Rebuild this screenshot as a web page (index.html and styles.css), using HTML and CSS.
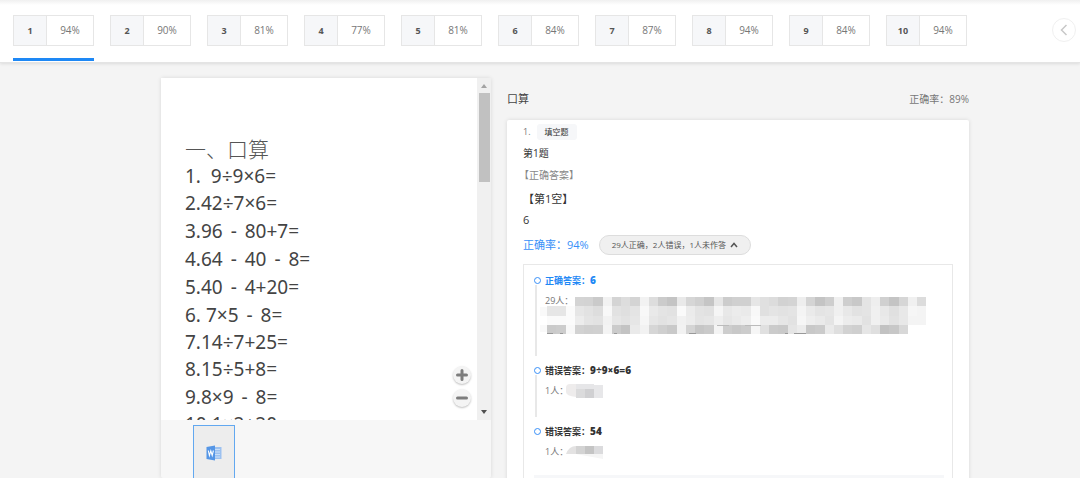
FILE: index.html
```html
<!DOCTYPE html>
<html lang="zh-CN">
<head>
<meta charset="utf-8">
<title>口算</title>
<link rel="stylesheet" href="styles.css">
</head>
<body>
<header class="topbar">
  <nav class="tabs">
    <button class="tab active"><b>1</b><span>94%</span></button>
    <button class="tab"><b>2</b><span>90%</span></button>
    <button class="tab"><b>3</b><span>81%</span></button>
    <button class="tab"><b>4</b><span>77%</span></button>
    <button class="tab"><b>5</b><span>81%</span></button>
    <button class="tab"><b>6</b><span>84%</span></button>
    <button class="tab"><b>7</b><span>87%</span></button>
    <button class="tab"><b>8</b><span>94%</span></button>
    <button class="tab"><b>9</b><span>84%</span></button>
    <button class="tab"><b>10</b><span>94%</span></button>
  </nav>
  <button class="prev" aria-label="上一页"><svg width="8" height="12" viewBox="0 0 8 12"><path d="M6.5 1L1.5 6l5 5" fill="none" stroke="#c8c8c8" stroke-width="1.5"/></svg></button>
</header>
<main class="content">
  <section class="paper">
    <div class="viewer">
      <article class="sheet">
        <h1>一、口算</h1>
        <p>1.&nbsp; 9÷9×6=</p>
        <p>2.42÷7×6=</p>
        <p class="tall">3.96<i>-</i>80+7=</p>
        <p class="tall">4.64<i>-</i>40<i>-</i>8=</p>
        <p class="tall">5.40<i>-</i>4+20=</p>
        <p class="tall">6. 7×5<i>-</i>8=</p>
        <p>7.14÷7+25=</p>
        <p>8.15÷5+8=</p>
        <p class="tall">9.8×9<i>-</i>8=</p>
        <p>10.1×2+20=</p>
      </article>
      <div class="zoomer">
        <button aria-label="放大"><svg width="12" height="12" viewBox="0 0 12 12"><path d="M6 1.5v9M1.5 6h9" stroke="#7d7d7d" stroke-width="3" stroke-linecap="round"/></svg></button>
        <button aria-label="缩小"><svg width="12" height="12" viewBox="0 0 12 12"><path d="M1.5 6h9" stroke="#7d7d7d" stroke-width="3" stroke-linecap="round"/></svg></button>
      </div>
      <div class="scrollbar">
        <svg width="6" height="4" viewBox="0 0 6 4"><path d="M0 4l3-4 3 4z" fill="#a3a3a3"/></svg>
        <div class="thumb"></div>
        <svg width="6" height="4" viewBox="0 0 6 4"><path d="M0 0l3 4 3-4z" fill="#505050"/></svg>
      </div>
    </div>
    <div class="files">
      <button class="file" aria-label="Word 文档">
        <svg width="16" height="16" viewBox="0 0 16 16"><path d="M8 2h7.5v12H8z" fill="#9cc1f0"/><path d="M9 4.5h5M9 7h5M9 9.5h5M9 12h5" stroke="#c9dff8"/><path d="M.5 2L9 .5v15L.5 14z" fill="#5596e6"/><path d="M2.3 5.5l1.1 5 1.4-4.6 1.4 4.6 1.2-5" fill="none" stroke="#fff" stroke-width="1.1"/></svg>
      </button>
    </div>
  </section>
  <section class="report">
    <div class="heading"><h2>口算</h2><span>正确率：89%</span></div>
    <div class="card">
      <div class="kind"><span>1.</span><em>填空题</em></div>
      <p class="title">第1题</p>
      <p class="label">【正确答案】</p>
      <p class="blank">【第1空】</p>
      <p class="value">6</p>
      <div class="rate"><strong>正确率：94%</strong><button class="summary">29人正确，2人错误，1人未作答 <svg width="8" height="6" viewBox="0 0 8 6"><path d="M1 5l3-3.5L7 5" fill="none" stroke="#555" stroke-width="1.5"/></svg></button></div>
      <ol class="answers">
        <li class="first">
          <h3 class="right">正确答案：<b>6</b></h3>
          <div class="people"><span>29人：</span><svg id="mosaic" class="mosaic" width="388" height="38" viewBox="0 0 388 38" shape-rendering="crispEdges"></svg></div>
        </li>
        <li class="second">
          <h3>错误答案：<b>9÷9×6=6</b></h3>
          <div class="people"><span>1人：</span><svg width="38" height="16" viewBox="0 0 38 16"><path d="M0 5q0-4 4-4h6v13Q0 13 0 9z" fill="#eeecec"/><path d="M10 1h18v5H10z" fill="#e6e6e8"/><path d="M10 6h18v9H10z" fill="#dbdbdc"/><path d="M19 6h9v9h-9z" fill="#d0d0d2"/><path d="M28 2h9v13h-9z" fill="#e7e7e9"/></svg></div>
        </li>
        <li class="third">
          <h3>错误答案：<b>54</b></h3>
          <div class="people"><span>1人：</span><svg width="38" height="16" viewBox="0 0 38 16"><path d="M0 10q3-8 10-8v8H0z" fill="#e3e2e2"/><path d="M10 2h9v8h-9z" fill="#d3d3d3"/><path d="M19 2h9v8h-9z" fill="#c4c4c4"/><path d="M28 2h9v8h-9z" fill="#dbdbdd"/><path d="M10 10h27v5z" fill="#f5f5f5"/></svg></div>
        </li>
        <li class="next"></li>
      </ol>
    </div>
  </section>
</main>
<script src="mosaic.js"></script>
</body>
</html>
```

FILE: styles.css
```css
* { box-sizing: border-box; }
body, h1, h2, h3, p, ol { margin: 0; padding: 0; }
body {
  height: 100vh;
  overflow: hidden;
  display: flex;
  flex-direction: column;
  background: #f4f4f4;
  font: 9px/16px "Open Sans", "Noto Sans CJK SC", sans-serif;
  color: #333;
}
button { font: inherit; color: inherit; padding: 0; border: 0; background: none; }
svg { display: block; flex: none; }

.topbar {
  flex: none;
  display: flex;
  justify-content: space-between;
  align-items: flex-start;
  padding: 15px 4px 1px 13px;
  background: linear-gradient(#f0f0f0, #fff 5px);
  border-bottom: 1px solid #e4e4e4;
  box-shadow: 0 1px 3px #0000001a;
  z-index: 1;
}
.tabs { display: flex; gap: 16px; }
.tab {
  display: grid;
  grid-template-columns: 34px 47px;
  padding-bottom: 12px;
  border-bottom: 3px solid transparent;
  line-height: 29px;
  color: #777;
}
.tab.active { border-color: #1e88f5; }
.tab b { border: 1px solid #e6e6e6; background: #f6f7f9; color: #555; }
.tab span { border: 1px solid #e6e6e6; border-left: 0; font-size: 10px; }
.prev {
  display: grid;
  place-items: center;
  width: 24px;
  height: 24px;
  margin-top: 3px;
  border: 1px solid #f0f0f0;
  border-radius: 50%;
}

.content {
  flex: 1;
  min-height: 0;
  display: flex;
  gap: 16px;
  padding: 15px 111px 0 161px;
}
.paper {
  flex: none;
  width: 330px;
  display: flex;
  flex-direction: column;
  background: #f7f7f7;
  box-shadow: 0 0 4px #0000001f;
  border-radius: 2px;
}
.viewer {
  position: relative;
  flex: 1;
  min-height: 0;
  display: flex;
  overflow: hidden;
  background: #fff;
}
.sheet {
  flex: 1;
  height: 0;
  padding: 59px 0 0 24px;
  font-family: "Noto Sans", "Noto Sans CJK SC", sans-serif;
  font-size: 19px;
  line-height: 27px;
  color: #444;
}
.sheet h1 {
  font: 300 21px/26px "Liberation Serif", "Noto Sans CJK SC", serif;
  color: #555;
}
.sheet p.tall { padding-top: 1px; }
.sheet i { display: inline-block; width: 22px; text-align: center; font-style: normal; }
.zoomer {
  position: absolute;
  right: 20px;
  bottom: 13px;
  display: grid;
  gap: 5px;
}
.zoomer button {
  display: grid;
  place-items: center;
  width: 18px;
  height: 18px;
  border-radius: 50%;
  background: #f4f4f4;
  box-shadow: 0 1px 2px #00000040;
}
.scrollbar {
  width: 14px;
  display: flex;
  flex-direction: column;
  align-items: center;
  gap: 5px;
  padding: 6px 0;
  background: #f0f0f0;
}
.thumb { width: 11px; height: 89px; margin-bottom: auto; background: #c1c1c1; }
.files { flex: none; height: 58px; padding: 5px 32px 0; }
.file {
  display: grid;
  justify-items: center;
  width: 42px;
  height: 64px;
  padding-top: 19px;
  align-content: start;
  border: 1px solid #62a8f0;
  background: #ededed;
}

.report { flex: 1; min-width: 0; }
.heading { display: flex; justify-content: space-between; align-items: center; height: 42px; font-size: 10px; color: #777; }
.heading h2 { font-size: 11px; font-weight: 400; color: #444; }
.card {
  padding: 4px 16px 0;
  background: #fff;
  border-radius: 2px;
  box-shadow: 0 0 4px #0000001f;
}
.kind { display: flex; gap: 6px; color: #777; }
.kind em { padding: 0 8px; border-radius: 3px; background: #f6f7f9; font-size: 8px; font-style: normal; color: #333; }
.title { margin-top: 5px; font-size: 10px; }
.label { margin: 6px 0 0 -4px; font-size: 10px; color: #888; }
.blank { margin-top: 8px; font-size: 11px; }
.value { margin-top: 5px; font-size: 11px; }
.rate { display: flex; align-items: center; gap: 10px; margin-top: 7px; }
.rate strong { font-size: 11px; font-weight: 400; color: #3890f8; }
.summary {
  display: flex;
  align-items: center;
  gap: 4px;
  height: 20px;
  padding: 0 12px;
  border: 1px solid #ddd;
  border-radius: 10px;
  background: #f0f0f0;
  font-size: 8px;
  color: #555;
}
.answers {
  margin-top: 9px;
  padding: 7px 8px 0 10px;
  border: 1px solid #e8e8e8;
  list-style: none;
}
.answers li { position: relative; padding-left: 11px; }
.answers .first { height: 90px; }
.answers .second { height: 61px; }
.answers .third { height: 52px; }
.answers .next { height: 40px; background: #f6f7f9; }
.answers h3 { font-size: 9px; line-height: 16px; color: #333; }
.answers h3 b { font-size: 10px; }
.answers h3.right { color: #1e88f5; }
.answers h3::before {
  content: "";
  position: absolute;
  left: 0;
  top: 5px;
  width: 5px;
  height: 5px;
  border: 1px solid #3890f8;
  border-radius: 50%;
}
.first::before, .second::before {
  content: "";
  position: absolute;
  left: 1px;
  top: 13px;
  bottom: 6px;
  width: 2px;
  background: #e8e8e8;
}
.people { position: relative; display: flex; margin-top: 4px; color: #777; }
.people span { width: 21px; white-space: nowrap; }
.mosaic { position: absolute; left: -5px; top: 4px; }
```

FILE: mosaic.js
```js
// Grey levels of the blocks that hide the names, one string per row.
const rows = [
  "-- -- -- d4 d3 ca f2 d4 dd d4 f2 dd cb c4 e9 d6 d0 c5 e6 cc d0 d0 e6 e0 dc d2 d4 ee d4 c4 ce f0 ce c8 e4 ee d0 c4 d6 f0 dc",
  "e6 e6 fb e6 e2 dd f8 e2 df e4 f8 e9 e4 e2 fa eb e3 e1 f5 e8 ec ea f8 e0 e4 e2 e4 f4 ea e4 e6 f0 e8 e2 e4 f0 e8 e0 e8 f6 f4",
  "fa fa fb ec e4 e2 f2 e6 e2 e6 f6 e6 e2 e5 f1 ec e4 e6 ee e6 ea ee fa ec ec e6 e2 f6 ee ea e4 f4 ec ea e2 f0 ea e2 e8 f4 f4",
  "ca cc f8 d2 cf d0 f4 cb c3 ea f2 d6 cf c9 f2 d4 c6 ca f4 cd c8 cc f6 e0 cb c9 e5 ec c8 cb ea df d2 cf e6 df c2 c7 d8"
];
const svg = document.getElementById("mosaic");
const edge = n => Math.round(n * 37 / 4);
const rect = (x, y, w, h, fill) => {
  const r = document.createElementNS("http://www.w3.org/2000/svg", "rect");
  Object.entries({ x, y, width: w, height: h, fill }).forEach(([k, v]) => r.setAttribute(k, v));
  svg.append(r);
};
rows.forEach((row, j) => row.split(" ").forEach((g, i) => {
  if (g !== "--") rect(7 + edge(i), edge(j), edge(i + 1) - edge(i), edge(j + 1) - edge(j), "#" + g + g + g);
}));
rect(0, 10, 7, 9, "#f9f9f9");
rect(0, 28, 7, 7, "#f9f9f9");
[[7, 6], [20, 3], [74, 3], [149, 7], [245, 3], [254, 12]].forEach(([x, w]) => rect(x, 36, w, 1, "#999999"));
[[177, 12], [205, 16]].forEach(([x, w]) => rect(x, 28, w, 1, "#bbbbbb"));
```
